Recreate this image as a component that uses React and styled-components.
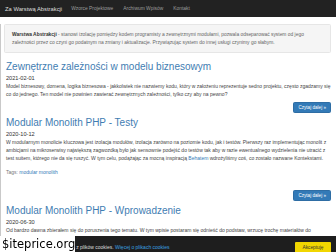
import React from "react";
import styled, { createGlobalStyle } from "styled-components";

const GlobalStyle = createGlobalStyle`
  html, body {
    margin: 0;
    padding: 0;
    background: #fff;
    overflow: hidden;
  }
  body {
    width: 336px;
    height: 252px;
    font-family: "Liberation Sans", Arial, sans-serif;
    font-size: 5px;
    line-height: 8px;
    color: #333;
  }
`;

const Navbar = styled.nav`
  height: 17px;
  background: #222;
  display: flex;
  align-items: center;
  padding: 0 5px;
`;
const Brand = styled.a`
  font-size: 5.8px;
  color: #ddd;
  padding-right: 4px;
  text-decoration: none;
`;
const NavLink = styled.a`
  font-size: 4.9px;
  color: #9d9d9d;
  padding: 0 5px;
  text-decoration: none;
`;

const Main = styled.main`
  border-left: 1px solid #c9c9c9;
  padding: 0 5px 20px 4px;
  min-height: 235px;
  box-sizing: border-box;
`;
const Well = styled.div`
  margin: 7px 0 8px -1px;
  padding: 6px 12px 6px 7px;
  background: #f5f5f5;
  border: 1px solid #e6e6e6;
  border-radius: 1.5px;
  color: #666;
  font-size: 4.9px;
  line-height: 7.5px;
  strong {
    color: #333;
  }
`;
const Post = styled.article`
  padding-left: 1px;
`;
const Title = styled.h2`
  margin: 4px 0 2px;
  font-size: 10px;
  line-height: 11px;
  font-weight: normal;
  color: #3f7db2;
`;
const Date = styled.div`
  font-size: 5.6px;
  line-height: 8px;
  color: #333;
`;
const Text = styled.p`
  margin: 0;
  color: #444;
  a {
    color: #337ab7;
    text-decoration: none;
  }
`;
const Tags = styled.p`
  margin: 6px 0 0;
  color: #777;
  a {
    color: #337ab7;
    text-decoration: none;
  }
`;
const Actions = styled.div`
  display: flex;
  justify-content: flex-end;
  margin: ${(p) => p.$top}px 0 ${(p) => p.$bottom}px;
`;
const Button = styled.a`
  display: inline-flex;
  align-items: center;
  height: 11px;
  padding: 0 4px;
  box-sizing: border-box;
  background: #337ab7;
  border: 1px solid #2e6da4;
  border-radius: 1.5px;
  color: #fff;
  font-size: 4.6px;
  text-decoration: none;
`;

const CookieBar = styled.div`
  position: fixed;
  left: 0;
  right: 0;
  bottom: 0;
  height: 16px;
  background: #1e1e1e;
  display: flex;
  align-items: flex-start;
  justify-content: space-between;
  padding: 0 5px 0 40px;
  box-sizing: border-box;
`;
const CookieText = styled.div`
  padding-top: 7px;
  color: #ddd;
  font-size: 5px;
  a {
    color: #3aa0e0;
    text-decoration: none;
  }
`;
const Accept = styled.a`
  margin-top: 6px;
  width: 36px;
  height: 12px;
  background: #f1d600;
  color: #333;
  font-size: 4.8px;
  display: flex;
  align-items: center;
  justify-content: center;
  border-radius: 1px;
`;
const Watermark = styled.div`
  position: fixed;
  left: 0;
  bottom: 0;
  height: 16px;
  width: 75px;
  background: #fff;
  color: #000;
  font-family: "DejaVu Sans", sans-serif;
  font-size: 11.5px;
  line-height: 16px;
  padding-left: 2px;
  box-sizing: border-box;
  white-space: nowrap;
`;

export default function App() {
  return (
    <>
      <GlobalStyle />
      <Navbar>
        <Brand>Za Warstwą Abstrakcji</Brand>
        <NavLink>Wzorce Projektowe</NavLink>
        <NavLink>Archiwum Wpisów</NavLink>
        <NavLink>Kontakt</NavLink>
      </Navbar>
      <Main>
        <Well>
          <strong>Warstwa Abstrakcji</strong> - stanowi izolację pomiędzy kodem programisty a
          zewnętrznymi modułami, pozwala odseparować system od jego zależności przez co czyni go
          podatnym na zmiany i aktualizacje. Przywiązując system do innej usługi czynimy go słabym.
        </Well>

        <Post>
          <Title>Zewnętrzne zależności w modelu biznesowym</Title>
          <Date>2021-02-01</Date>
          <Text>
            Model biznesowy, domena, logika biznesowa - jakkolwiek nie nazwiemy kodu, który w
            założeniu reprezentuje sedno projektu, często zgadzamy się co do jednego. Ten model nie
            powinien zawierać zewnętrznych zależności, tylko czy aby na pewno?
          </Text>
          <Actions $top={4} $bottom={1}>
            <Button>Czytaj dalej »</Button>
          </Actions>
        </Post>

        <Post>
          <Title>Modular Monolith PHP - Testy</Title>
          <Date>2020-10-12</Date>
          <Text>
            W modularnym monolicie kluczowa jest izolacja modułów, izolacja zarówno na poziomie
            kodu, jak i testów. Pierwszy raz implementując monolit z ambicjami na mikroserwisy
            największą zagwozdką było jak sensownie podejść do testów tak aby w razie ewentualnego
            wydzielenia nie utracić z test suitem, którego nie da się ruszyć. W tym celu, podążając
            za mocną inspiracją <a>Behatem</a> wdrożyliśmy coś, co zostało nazwane Kontekstami.
          </Text>
          <Tags>
            Tags: <a>modular monolith</a>
          </Tags>
          <Actions $top={14} $bottom={4}>
            <Button>Czytaj dalej »</Button>
          </Actions>
        </Post>

        <Post>
          <Title>Modular Monolith PHP - Wprowadzenie</Title>
          <Date>2020-06-30</Date>
          <Text>
            Od bardzo dawna zbierałem się do poruszenia tego tematu. W tym wpisie postaram się
            odnieść do podstaw, wrzucę trochę materiałów do przemyślenia i zastanowienia się nad
            tym, jak podejść do modularnego monolitu, gdy zaczynamy nowy projekt.
          </Text>
        </Post>
      </Main>

      <CookieBar>
        <CookieText>
          Strona korzysta z plików cookies. <a>Więcej o plikach cookies</a>
        </CookieText>
        <Accept>Akceptuję</Accept>
      </CookieBar>
      <Watermark>$iteprice.org</Watermark>
    </>
  );
}
